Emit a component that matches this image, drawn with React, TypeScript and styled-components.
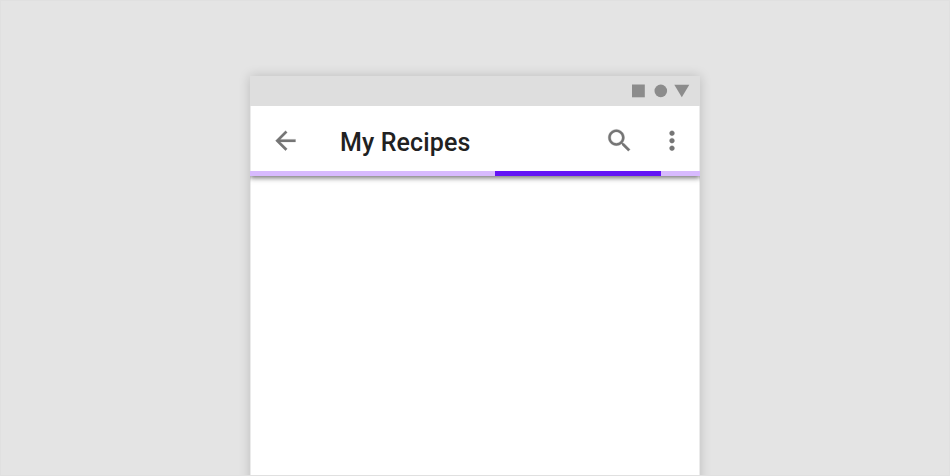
import React from 'react';
import styled, { createGlobalStyle } from 'styled-components';

const GlobalStyle = createGlobalStyle`
  * { box-sizing: border-box; }
  body { margin: 0; font-family: Roboto, "Liberation Sans", sans-serif; }
`;

const Stage = styled.main`
  width: 950px;
  height: 476px;
  padding: 75px 0 0 249px;
  overflow: hidden;
  background: #e4e4e4;
  border: 1px solid #e0e0e0;
`;

const Device = styled.section`
  display: flex;
  flex-direction: column;
  width: 450px;
  height: 440px;
  background: #fff;
  border: solid #ebebeb;
  border-width: 0 1px;
  box-shadow: 0 0 11px rgba(0, 0, 0, 0.18);
`;

const StatusBar = styled.div`
  display: flex;
  justify-content: flex-end;
  height: 30px;
  margin: 0 -1px;
  padding-right: 1px;
  background: #dedede;
  color: #8c8c8c;
`;

const StatusIcons = styled.svg`
  width: 70px;
  height: 30px;
  fill: currentColor;
`;

const AppBar = styled.header`
  flex: none;
  height: 70px;
  margin: 0 -1px;
  background: #fff;
  box-shadow: 0 2px 5px rgba(0, 0, 0, 0.55);
  clip-path: inset(0 0 -12px 0);
`;

const Toolbar = styled.div`
  display: flex;
  align-items: center;
  height: 65px;
  padding: 5px 11px 0 20px;
  border: solid #ebebeb;
  border-width: 0 1px;
`;

const IconButton = styled.button`
  display: flex;
  width: 30px;
  height: 30px;
  padding: 0;
  border: 0;
  background: none;
  color: #757575;
`;

const Icon = styled.svg<{ $shift: number }>`
  width: 30px;
  height: 30px;
  fill: currentColor;
  stroke: currentColor;
  stroke-width: 0.2;
`;

const Title = styled.h1`
  flex: 1;
  margin: 4px 0 0 39px;
  color: #212121;
  font-size: 25px;
  font-weight: 500;
  line-height: 30px;
  letter-spacing: 0.12px;
`;

const Actions = styled.div`
  display: flex;
  gap: 23px;
`;

const ProgressTrack = styled.div`
  height: 5px;
  padding-left: 245px;
  background: #d7bafd;
`;

const ProgressBar = styled.div`
  width: 166px;
  height: 5px;
  background: #6314f5;
`;

function ToolButton({ label, path, shift = 0.4 }: { label: string; path: string; shift?: number }) {
  return (
    <IconButton aria-label={label}>
      <Icon $shift={shift} viewBox={`${shift} 0.3 24 24`}><path d={path} /></Icon>
    </IconButton>
  );
}

export default function App() {
  return (
    <>
      <GlobalStyle />
      <Stage>
        <Device>
          <StatusBar>
            <StatusIcons viewBox="0 0 70 30">
              <rect x="3" y="8.5" width="12.8" height="12.8" />
              <circle cx="31.8" cy="14.9" r="6.3" />
              <path d="M45.3 8.7h15L52.8 21.3z" />
            </StatusIcons>
          </StatusBar>
          <AppBar>
            <Toolbar>
              <ToolButton label="Back" path="M20 11H7.83l5.59-5.59L12 4l-8 8 8 8 1.41-1.41L7.83 13H20v-2z" />
              <Title>My Recipes</Title>
              <Actions>
                <ToolButton label="Search" path="M15.5 14h-.79l-.28-.27C15.41 12.59 16 11.11 16 9.5 16 5.91 13.09 3 9.5 3S3 5.91 3 9.5 5.91 16 9.5 16c1.61 0 3.09-.59 4.23-1.57l.27.28v.79l5 4.99L20.49 19l-4.99-5zm-6 0C7.01 14 5 11.99 5 9.5S7.01 5 9.5 5 14 7.01 14 9.5 11.99 14 9.5 14z" />
                <ToolButton label="More options" shift={0.8} path="M12 8c1.1 0 2-.9 2-2s-.9-2-2-2-2 .9-2 2 .9 2 2 2zm0 2c-1.1 0-2 .9-2 2s.9 2 2 2 2-.9 2-2-.9-2-2-2zm0 6c-1.1 0-2 .9-2 2s.9 2 2 2 2-.9 2-2-.9-2-2-2z" />
              </Actions>
            </Toolbar>
            <ProgressTrack role="progressbar"><ProgressBar /></ProgressTrack>
          </AppBar>
        </Device>
      </Stage>
    </>
  );
}
